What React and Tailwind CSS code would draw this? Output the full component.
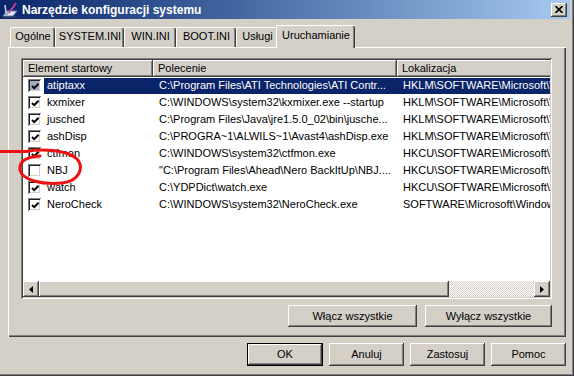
import React from "react";

const raised =
  "bg-[#d4d0c8] shadow-[inset_-1px_-1px_#404040,inset_1px_1px_#ffffff,inset_-2px_-2px_#808080]";

const rows = [
  ["atiptaxx", "C:\\Program Files\\ATI Technologies\\ATI Contr...", "HKLM\\SOFTWARE\\Microsoft\\Windows\\CurrentVersion\\Run", true, true],
  ["kxmixer", "C:\\WINDOWS\\system32\\kxmixer.exe --startup", "HKLM\\SOFTWARE\\Microsoft\\Windows\\CurrentVersion\\Run", true, false],
  ["jusched", "C:\\Program Files\\Java\\jre1.5.0_02\\bin\\jusche...", "HKLM\\SOFTWARE\\Microsoft\\Windows\\CurrentVersion\\Run", true, false],
  ["ashDisp", "C:\\PROGRA~1\\ALWILS~1\\Avast4\\ashDisp.exe", "HKLM\\SOFTWARE\\Microsoft\\Windows\\CurrentVersion\\Run", true, false],
  ["ctfmon", "C:\\WINDOWS\\system32\\ctfmon.exe", "HKCU\\SOFTWARE\\Microsoft\\Windows\\CurrentVersion\\Run", true, false],
  ["NBJ", "\"C:\\Program Files\\Ahead\\Nero BackItUp\\NBJ....", "HKCU\\SOFTWARE\\Microsoft\\Windows\\CurrentVersion\\Run", false, false],
  ["watch", "C:\\YDPDict\\watch.exe", "HKCU\\SOFTWARE\\Microsoft\\Windows\\CurrentVersion\\Run", true, false],
  ["NeroCheck", "C:\\WINDOWS\\system32\\NeroCheck.exe", "SOFTWARE\\Microsoft\\Windows\\CurrentVersion\\Run", true, false],
];

function Check({ checked, selected }) {
  return (
    <div
      className={`w-[13px] h-[13px] shrink-0 flex items-center justify-center shadow-[inset_1px_1px_#808080,inset_-1px_-1px_#ffffff,inset_2px_2px_#202020,inset_-2px_-2px_#d4d0c8] ${
        selected ? "bg-[#a3a9c0]" : "bg-white"
      }`}
    >
      {checked && (
        <svg width="9" height="9" viewBox="0 0 9 9" className="ml-[1px] mt-[1px]">
          <path d="M1 4 L3.2 6.2 L7.6 1.8" stroke="#000" strokeWidth="2" fill="none" />
        </svg>
      )}
    </div>
  );
}

function Tab({ label, w, active }) {
  if (active) {
    return (
      <div
        className={`relative z-10 -mb-px -ml-[2px] h-[23px] ${w} bg-[#d4d0c8] border-l border-t border-white rounded-tl-[2px] rounded-tr-[2px] shadow-[inset_-1px_0_#404040,inset_-2px_0_#808080] flex items-start justify-center pt-[4px]`}
      >
        {label}
      </div>
    );
  }
  return (
    <div
      className={`h-[20px] ${w} bg-[#d4d0c8] border-l border-t border-white rounded-tl-[2px] rounded-tr-[2px] shadow-[inset_-1px_0_#404040,inset_-2px_0_#808080] flex items-start justify-center pt-[3px]`}
    >
      {label}
    </div>
  );
}

function Btn({ children, w, def }) {
  if (def) {
    return (
      <div className={`${w} h-[23px] border border-black`}>
        <div className={`w-full h-full ${raised} flex items-center justify-center`}>{children}</div>
      </div>
    );
  }
  return <div className={`${w} h-[23px] ${raised} flex items-center justify-center`}>{children}</div>;
}

function Arrow({ dir }) {
  return (
    <svg width="4" height="7" viewBox="0 0 4 7">
      {dir === "left" ? <path d="M4 0 L0 3.5 L4 7 Z" fill="#000" /> : <path d="M0 0 L4 3.5 L0 7 Z" fill="#000" />}
    </svg>
  );
}

export default function App() {
  return (
    <div className="relative w-[574px] h-[376px] overflow-hidden bg-[#d4d0c8] font-['Liberation_Sans',Arial,sans-serif] text-[11px] text-black shadow-[inset_-1px_-1px_#404040,inset_-2px_-2px_#808080] pr-[4px] pb-[4px] leading-none">
      <div className="flex flex-col h-full">
        {/* Title bar */}
        <div className="h-[19px] w-[570px] flex items-center bg-gradient-to-r from-[#0a246a] to-[#a6caf0] pl-[2px] pr-[2px]">
          <svg width="17" height="16" viewBox="0 0 17 16" className="shrink-0">
            <path d="M1 14 L5 9 L15 9 L11 14 Z" fill="#dfe8f5" stroke="#6a7fa8" strokeWidth="1" />
            <path d="M2 13 L5 10 L8 10 L5 13 Z" fill="#8fa7cf" />
            <path d="M3 3 L4 11" stroke="#c9d4e8" strokeWidth="1.5" />
            <path d="M7 11 L14 1" stroke="#e04090" strokeWidth="1.6" />
            <path d="M1 15 L15 15" stroke="#404a66" strokeWidth="1" />
          </svg>
          <span className="ml-[3px] text-white font-bold text-[12px]">Narzędzie konfiguracji systemu</span>
          <div className="flex-1" />
          <div className={`w-[16px] h-[14px] ${raised} flex items-center justify-center`}>
            <svg width="8" height="7" viewBox="0 0 8 7">
              <path d="M0.5 0 L7.5 7 M7.5 0 L0.5 7" stroke="#000" strokeWidth="1.6" />
            </svg>
          </div>
          <div className="w-[1px]" />
        </div>

        {/* Tabs */}
        <div className="mt-[6px] ml-[10px] h-[22px] flex items-end">
          <Tab label="Ogólne" w="w-[45px]" />
          <Tab label="SYSTEM.INI" w="w-[69px]" />
          <Tab label="WIN.INI" w="w-[52px]" />
          <Tab label="BOOT.INI" w="w-[60px]" />
          <Tab label="Usługi" w="w-[42px]" />
          <Tab label="Uruchamianie" w="w-[79px]" active />
        </div>

        {/* Panel */}
        <div className="ml-[8px] w-[558px] h-[290px] border-l border-t border-white shadow-[inset_-1px_-1px_#404040,inset_-2px_-2px_#808080] flex flex-col pl-[12px] pt-[10px]">
          {/* List */}
          <div className="w-[531px] h-[241px] p-[2px] bg-white shadow-[inset_1px_1px_#808080,inset_-1px_-1px_#ffffff,inset_2px_2px_#404040,inset_-2px_-2px_#d4d0c8] flex flex-col">
            <div className="flex-1 overflow-hidden flex flex-col">
              {/* Header */}
              <div className="h-[17px] flex shrink-0">
                <div className={`w-[130px] shrink-0 ${raised} flex items-center pl-[5px]`}>Element startowy</div>
                <div className={`w-[244px] shrink-0 ${raised} flex items-center pl-[5px]`}>Polecenie</div>
                <div className={`w-[260px] shrink-0 ${raised} flex items-center pl-[5px]`}>Lokalizacja</div>
              </div>
              {/* Rows */}
              <div className="flex-1 flex flex-col">
                {rows.map(([name, cmd, loc, checked, sel]) => (
                  <div key={name} className="h-[17px] flex items-center shrink-0">
                    <div className="w-[21px] shrink-0 flex items-center pl-[5px]">
                      <Check checked={checked} selected={sel} />
                    </div>
                    <div className={`flex h-[16px] items-center ${sel ? "bg-[#0a246a] text-white" : ""}`}>
                      <div className="w-[109px] shrink-0 pl-[3px] whitespace-nowrap">{name}</div>
                      <div className="w-[244px] shrink-0 pl-[6px] whitespace-nowrap overflow-hidden">{cmd}</div>
                      <div className="w-[260px] shrink-0 pl-[6px] whitespace-nowrap">{loc}</div>
                    </div>
                  </div>
                ))}
              </div>
              {/* Horizontal scrollbar */}
              <div className="h-[16px] flex shrink-0">
                <div className={`w-[16px] h-[16px] ${raised} flex items-center justify-center`}>
                  <Arrow dir="left" />
                </div>
                <div className={`w-[410px] h-[16px] ${raised}`} />
                <div className="flex-1 bg-[image:repeating-conic-gradient(#ffffff_0_25%,#d4d0c8_0_50%)] bg-size-[2px_2px]" />
                <div className={`w-[16px] h-[16px] ${raised} flex items-center justify-center`}>
                  <Arrow dir="right" />
                </div>
              </div>
            </div>
          </div>

          {/* Enable/disable buttons */}
          <div className="mt-[6px] w-[531px] flex justify-end gap-[8px]">
            <div className={`w-[129px] h-[22px] ${raised} flex items-center justify-center`}>Włącz wszystkie</div>
            <div className={`w-[127px] h-[22px] ${raised} flex items-center justify-center`}>Wyłącz wszystkie</div>
          </div>
        </div>

        {/* Bottom buttons */}
        <div className="mt-[6px] w-[566px] flex justify-end gap-[6px]">
          <Btn w="w-[76px]" def>OK</Btn>
          <Btn w="w-[75px]">Anuluj</Btn>
          <Btn w="w-[75px]">Zastosuj</Btn>
          <Btn w="w-[75px]">Pomoc</Btn>
        </div>
      </div>

      {/* Red annotation */}
      <svg className="absolute left-0 top-0 pointer-events-none" width="574" height="376" viewBox="0 0 574 376">
        <path
          d="M0 151.5 L26 151.5 C 40 149, 66 149, 77 159 C 84 167, 80 181, 62 183 C 42 185, 22 180, 20 170 C 19 162, 25 157, 40 156"
          stroke="#ee1111"
          strokeWidth="3"
          fill="none"
          strokeLinecap="round"
        />
      </svg>
    </div>
  );
}
